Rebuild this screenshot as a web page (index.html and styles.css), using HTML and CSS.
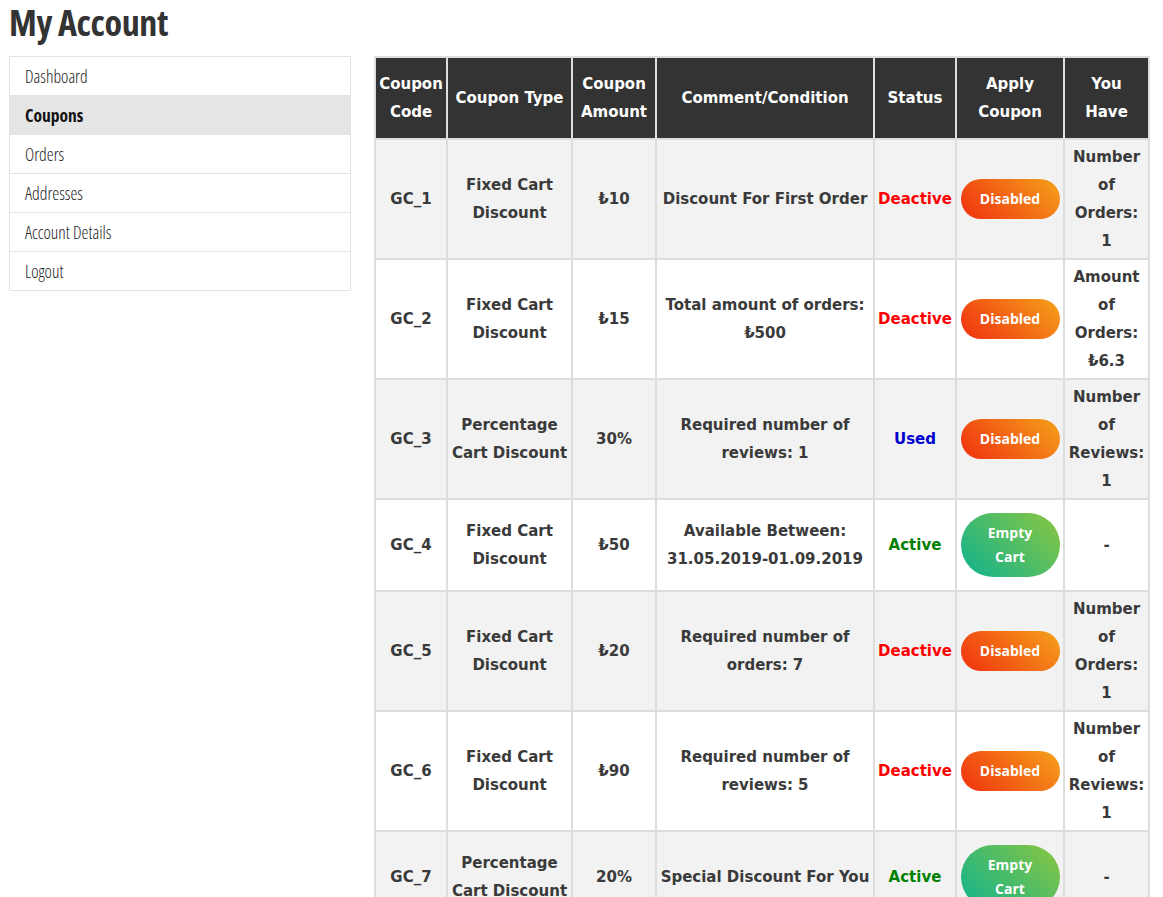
FILE: index.html
```html
<!DOCTYPE html>
<html>
<head>
<meta charset="utf-8">
<link rel="stylesheet" href="styles.css">
</head>
<body>
<h1 class="title">My Account</h1>
<div class="layout">
  <nav class="side">
    <a class="side-item">Dashboard</a>
    <a class="side-item is-active">Coupons</a>
    <a class="side-item">Orders</a>
    <a class="side-item">Addresses</a>
    <a class="side-item">Account Details</a>
    <a class="side-item">Logout</a>
  </nav>
  <table class="coupons">
    <colgroup>
      <col class="c1"><col class="c2"><col class="c3"><col class="c4"><col class="c5"><col class="c6"><col class="c7">
    </colgroup>
    <thead>
      <tr>
        <th>Coupon Code</th><th>Coupon Type</th><th>Coupon Amount</th><th>Comment/Condition</th><th>Status</th><th>Apply Coupon</th><th>You Have</th>
      </tr>
    </thead>
    <tbody>
      <tr class="odd">
        <td>GC_1</td><td>Fixed Cart Discount</td><td>₺10</td><td>Discount For First Order</td><td class="st-red">Deactive</td><td><span class="btn btn-off">Disabled</span></td><td>Number of Orders: 1</td>
      </tr>
      <tr>
        <td>GC_2</td><td>Fixed Cart Discount</td><td>₺15</td><td>Total amount of orders: ₺500</td><td class="st-red">Deactive</td><td><span class="btn btn-off">Disabled</span></td><td>Amount of Orders: ₺6.3</td>
      </tr>
      <tr class="odd">
        <td>GC_3</td><td>Percentage Cart Discount</td><td>30%</td><td>Required number of reviews: 1</td><td class="st-blue">Used</td><td><span class="btn btn-off">Disabled</span></td><td>Number of Reviews: 1</td>
      </tr>
      <tr>
        <td>GC_4</td><td>Fixed Cart Discount</td><td>₺50</td><td>Available Between: 31.05.2019-01.09.2019</td><td class="st-green">Active</td><td><span class="btn btn-on">Empty Cart</span></td><td>-</td>
      </tr>
      <tr class="odd">
        <td>GC_5</td><td>Fixed Cart Discount</td><td>₺20</td><td>Required number of orders: 7</td><td class="st-red">Deactive</td><td><span class="btn btn-off">Disabled</span></td><td>Number of Orders: 1</td>
      </tr>
      <tr>
        <td>GC_6</td><td>Fixed Cart Discount</td><td>₺90</td><td>Required number of reviews: 5</td><td class="st-red">Deactive</td><td><span class="btn btn-off">Disabled</span></td><td>Number of Reviews: 1</td>
      </tr>
      <tr class="odd">
        <td>GC_7</td><td>Percentage Cart Discount</td><td>20%</td><td>Special Discount For You</td><td class="st-green">Active</td><td><span class="btn btn-on">Empty Cart</span></td><td>-</td>
      </tr>
    </tbody>
  </table>
</div>
</body>
</html>
```
FILE: styles.css
```css
html, body {
  margin: 0;
  padding: 0;
  background: #fff;
}
body {
  padding: 0 9px;
  font-family: "Open Sans", "Liberation Sans", sans-serif;
  color: #333;
}
.title {
  margin: 0;
  height: 56px;
  font-size: 36px;
  line-height: 46px;
  font-weight: 700;
  font-stretch: 75%;
  color: #333;
  letter-spacing: -0.4px;
}
.layout {
  display: flex;
  align-items: flex-start;
  gap: 23px;
}
.side {
  width: 342px;
  flex: none;
  border: 1px solid #e4e4e4;
  box-sizing: border-box;
  display: flex;
  flex-direction: column;
}
.side-item {
  display: block;
  height: 38px;
  line-height: 38px;
  padding-left: 15px;
  font-size: 17.5px;
  font-weight: 300;
  font-stretch: 75%;
  color: #222;
  border-top: 1px solid #e4e4e4;
}
.side-item:first-child {
  border-top: 0;
}
.side-item.is-active {
  background: #e5e5e5;
  font-weight: 700;
  color: #111;
}
.coupons {
  width: 774px;
  flex: none;
  table-layout: fixed;
  border-collapse: collapse;
  border: 2px solid #ddd;
  font-family: "DejaVu Sans", sans-serif;
  font-size: 15px;
  font-weight: 700;
}
.c1 { width: 72px; }
.c2 { width: 125px; }
.c3 { width: 84px; }
.c4 { width: 218px; }
.c5 { width: 82px; }
.c6 { width: 108px; }
.c7 { width: 85px; }
.coupons th, .coupons td {
  border: 2px solid #ddd;
  text-align: center;
  vertical-align: middle;
  padding: 3px 3px;
  line-height: 28px;
}
.coupons th {
  background: #333;
  color: #fff;
  height: 76px;
  padding: 2px 3px;
}
.coupons td {
  color: #3a3a3a;
  background: #fff;
}
.coupons tr.odd td {
  background: #f2f2f2;
}
.st-red { color: #f00 !important; }
.st-blue { color: #0000d0 !important; }
.st-green { color: #008000 !important; }
.btn {
  display: inline-block;
  width: 99px;
  box-sizing: border-box;
  color: #fff;
  font-family: "Open Sans", sans-serif;
  font-weight: 700;
  font-size: 14px;
  vertical-align: middle;
}
.btn-off {
  height: 40px;
  line-height: 40px;
  border-radius: 20px;
  background: linear-gradient(45deg, #f0300f 0%, #f5a21a 100%);
}
.btn-on {
  height: 64px;
  line-height: 24px;
  padding: 8px 20px;
  margin: 10px 0;
  border-radius: 32px;
  background: linear-gradient(45deg, #0eb28f 0%, #8cc63f 100%);
}
```
